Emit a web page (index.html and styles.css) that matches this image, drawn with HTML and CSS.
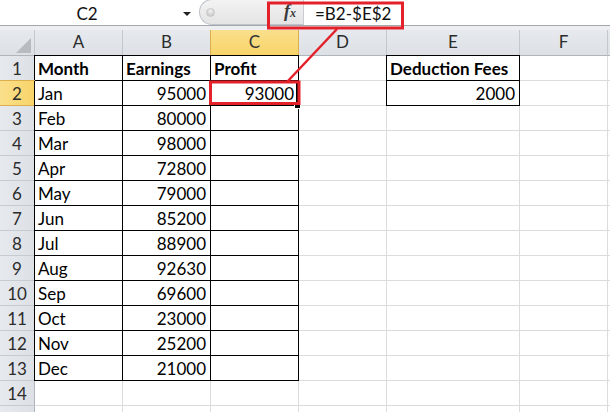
FILE: index.html
```html
<!DOCTYPE html>
<html>
<head>
<meta charset="utf-8">
<link rel="stylesheet" href="styles.css">
</head>
<body>
<div class="app">
  <div class="topbar">
    <div class="namebox">C2</div>
    <div class="drop"><span class="arrow"></span></div>
    <div class="fxpill">
      <span class="dot"></span>
      <span class="fx"><i>f</i><span class="fxx">x</span></span>
    </div>
    <div class="input">=B2-$E$2</div>
  </div>
  <div class="band"></div>
  <div class="sheet">
    <div class="c h corner"><span class="tri"></span></div>
    <div class="c h">A</div><div class="c h">B</div><div class="c h selh">C</div><div class="c h">D</div><div class="c h">E</div><div class="c h">F</div><div class="c h"></div>

    <div class="c rh">1</div>
    <div class="c b tb tlt">Month</div><div class="c b tb tt">Earnings</div><div class="c b tb tt">Profit</div><div class="c"></div><div class="c b tb tlt">Deduction Fees</div><div class="c"></div><div class="c"></div>

    <div class="c rh selr">2</div>
    <div class="c tb tl">Jan</div><div class="c r tb">95000</div><div class="c r tb">93000</div><div class="c"></div><div class="c r tb tl">2000</div><div class="c"></div><div class="c"></div>

    <div class="c rh">3</div>
    <div class="c tb tl">Feb</div><div class="c r tb">80000</div><div class="c tb"></div><div class="c"></div><div class="c"></div><div class="c"></div><div class="c"></div>

    <div class="c rh">4</div>
    <div class="c tb tl">Mar</div><div class="c r tb">98000</div><div class="c tb"></div><div class="c"></div><div class="c"></div><div class="c"></div><div class="c"></div>

    <div class="c rh">5</div>
    <div class="c tb tl">Apr</div><div class="c r tb">72800</div><div class="c tb"></div><div class="c"></div><div class="c"></div><div class="c"></div><div class="c"></div>

    <div class="c rh">6</div>
    <div class="c tb tl">May</div><div class="c r tb">79000</div><div class="c tb"></div><div class="c"></div><div class="c"></div><div class="c"></div><div class="c"></div>

    <div class="c rh">7</div>
    <div class="c tb tl">Jun</div><div class="c r tb">85200</div><div class="c tb"></div><div class="c"></div><div class="c"></div><div class="c"></div><div class="c"></div>

    <div class="c rh">8</div>
    <div class="c tb tl">Jul</div><div class="c r tb">88900</div><div class="c tb"></div><div class="c"></div><div class="c"></div><div class="c"></div><div class="c"></div>

    <div class="c rh">9</div>
    <div class="c tb tl">Aug</div><div class="c r tb">92630</div><div class="c tb"></div><div class="c"></div><div class="c"></div><div class="c"></div><div class="c"></div>

    <div class="c rh">10</div>
    <div class="c tb tl">Sep</div><div class="c r tb">69600</div><div class="c tb"></div><div class="c"></div><div class="c"></div><div class="c"></div><div class="c"></div>

    <div class="c rh">11</div>
    <div class="c tb tl">Oct</div><div class="c r tb">23000</div><div class="c tb"></div><div class="c"></div><div class="c"></div><div class="c"></div><div class="c"></div>

    <div class="c rh">12</div>
    <div class="c tb tl">Nov</div><div class="c r tb">25200</div><div class="c tb"></div><div class="c"></div><div class="c"></div><div class="c"></div><div class="c"></div>

    <div class="c rh">13</div>
    <div class="c tb tl">Dec</div><div class="c r tb">21000</div><div class="c tb"></div><div class="c"></div><div class="c"></div><div class="c"></div><div class="c"></div>

    <div class="c rh">14</div>
    <div class="c"></div><div class="c"></div><div class="c"></div><div class="c"></div><div class="c"></div><div class="c"></div><div class="c"></div>

    <div class="c rh"></div>
    <div class="c"></div><div class="c"></div><div class="c"></div><div class="c"></div><div class="c"></div><div class="c"></div><div class="c"></div>
  </div>

  <div class="selection"></div>
  <div class="handle"></div>

  <svg class="annot" width="610" height="412" viewBox="0 0 610 412">
    <rect x="268.5" y="3" width="134" height="25" fill="none" stroke="#e3212a" stroke-width="3"/>
    <line x1="337" y1="29" x2="287" y2="82" stroke="#e3212a" stroke-width="2.5"/>
    <rect x="210.5" y="82" width="88.5" height="21.5" fill="none" stroke="#e3212a" stroke-width="3"/>
  </svg>
</div>
</body>
</html>
```

FILE: styles.css
```css
* { box-sizing: border-box; }
html, body { margin: 0; padding: 0; background: #fff; }
body {
  font-family: Lato, "Liberation Sans", sans-serif;
  font-size: 17px;
  color: #000;
}
.app {
  position: relative;
  width: 610px;
  height: 412px;
  overflow: hidden;
  background: #fff;
}

/* formula bar */
.topbar {
  display: flex;
  height: 26px;
  border-bottom: 1px solid #a3a8ae;
  background: #fff;
}
.namebox {
  width: 174px;
  text-align: center;
  line-height: 25px;
  padding-top: 1px;
  color: #111;
}
.drop {
  width: 25px;
  display: flex;
  justify-content: center;
  align-items: flex-start;
  padding-top: 12px;
}
.arrow {
  width: 0;
  height: 0;
  border-left: 4px solid transparent;
  border-right: 4px solid transparent;
  border-top: 4px solid #222;
}
.fxpill {
  width: 104px;
  height: 26px;
  margin-top: -1px;
  display: flex;
  align-items: center;
  background: linear-gradient(#f3f3f3, #e4e4e4);
  border: 1px solid #bfc3c8;
  border-right: none;
  border-radius: 13px 0 0 13px;
}
.dot {
  width: 9px;
  height: 9px;
  margin-left: 6px;
  border-radius: 50%;
  background: radial-gradient(circle at 50% 30%, #f4f4f4 0, #d4d4d4 55%, #c2c2c2 100%);
  border: 1px solid #c8c8c8;
}
.fx {
  margin-left: auto;
  margin-right: 7px;
  font-family: "Liberation Serif", serif;
  font-size: 18px;
  font-weight: 700;
  color: #3a3a3a;
  line-height: 20px;
}
.fx i { font-style: italic; }
.fxx { font-style: italic; font-size: 12px; margin-left: 0; }
.input {
  flex: 1;
  border-left: 1px solid #c9ccd0;
  padding-left: 11px;
  line-height: 25px;
  padding-top: 1px;
  color: #111;
}
.band {
  height: 4px;
  background: #eceef1;
}

/* grid */
.sheet {
  display: grid;
  grid-template-columns: 35px 88px 88px 88px 88px 133px 88px 20px;
  grid-template-rows: 26px repeat(15, 25px);
}
.c {
  background: #fff;
  border-right: 1px solid #dadcde;
  border-bottom: 1px solid #dadcde;
  line-height: 23px;
  padding: 1px 3px 0 3px;
  white-space: nowrap;
  overflow: hidden;
}
.h {
  background: linear-gradient(#e6e9ed, #dde1e6);
  border-right: 1px solid #c3c8ce;
  border-bottom: 1px solid #aeb5bd;
  text-align: center;
  line-height: 24px;
  color: #2c2c2c;
  padding: 0;
}
.corner {
  display: flex;
  justify-content: flex-end;
  align-items: flex-end;
  padding: 0 3px 2px 0;
}
.tri {
  width: 0;
  height: 0;
  border-left: 15px solid transparent;
  border-bottom: 15px solid #b8bcc1;
}
.rh {
  background: linear-gradient(90deg, #e6e9ed, #dde1e6);
  border-right: 1px solid #aeb5bd;
  border-bottom: 1px solid #c6cbd1;
  text-align: center;
  color: #2c2c2c;
  padding-left: 0;
  padding-right: 0;
}
.selh {
  background: linear-gradient(#fadf8c, #f8d469);
  border-right: 1px solid #dcae4c;
  border-bottom: 1px solid #dcae4c;
  box-shadow: -1px 0 0 #dcae4c;
  color: #333;
}
.selr {
  background: linear-gradient(90deg, #fadf8c, #f8d469);
  border-right: 1px solid #dcae4c;
  border-bottom: 1px solid #dcae4c;
  box-shadow: 0 -1px 0 #dcae4c;
}
.b { font-weight: 700; }
.r { text-align: right; padding-right: 4px; }
.tb {
  border-right: 1px solid #000;
  border-bottom: 1px solid #000;
}
.tl { box-shadow: -1px 0 0 #000; }
.tt { box-shadow: 0 -1px 0 #000; }
.tlt { box-shadow: -1px 0 0 #000, 0 -1px 0 #000, -1px -1px 0 #000; }

/* overlays */
.selection {
  position: absolute;
  left: 209px;
  top: 80px;
  width: 89px;
  height: 26px;
  border: 2px solid #000;
}
.handle {
  position: absolute;
  left: 294px;
  top: 102px;
  width: 7px;
  height: 7px;
  background: #000;
  border: 1px solid #fff;
}
.annot {
  position: absolute;
  left: 0;
  top: 0;
  pointer-events: none;
}
```
